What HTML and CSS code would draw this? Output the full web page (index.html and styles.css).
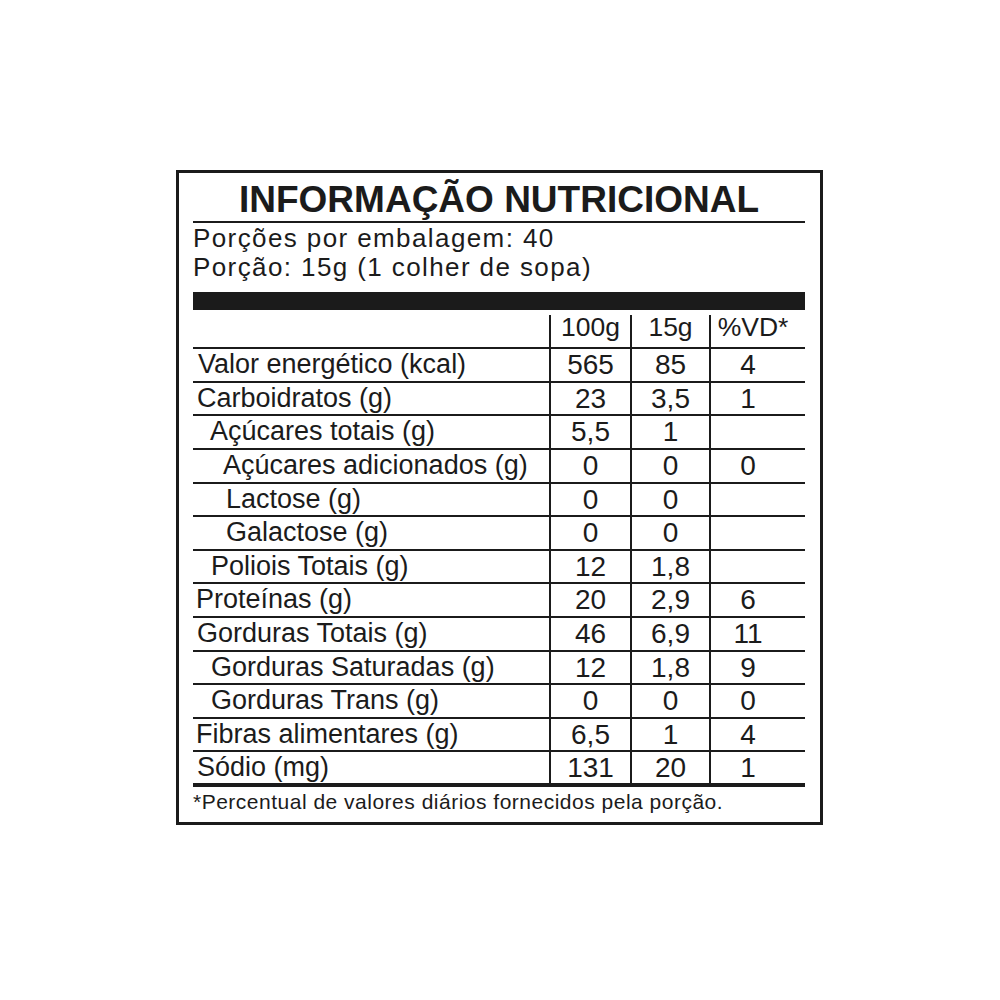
FILE: index.html
```html
<!DOCTYPE html>
<html lang="pt-BR">
<head>
<meta charset="utf-8">
<title>Informação Nutricional</title>
<link rel="stylesheet" href="styles.css">
</head>
<body>
<div class="label">
  <h1 class="title">INFORMAÇÃO NUTRICIONAL</h1>
  <div class="portion">
    <div>Porções por embalagem: 40</div>
    <div>Porção: 15g (1 colher de sopa)</div>
  </div>
  <div class="bar"></div>
  <div class="row head">
    <div class="name"></div>
    <div class="num">100g</div>
    <div class="num">15g</div>
    <div class="num vd">%VD*</div>
  </div>
  <div class="row"><div class="name i0">Valor energético (kcal)</div><div class="num">565</div><div class="num">85</div><div class="num vd">4</div></div>
  <div class="row"><div class="name i0c">Carboidratos (g)</div><div class="num">23</div><div class="num">3,5</div><div class="num vd">1</div></div>
  <div class="row"><div class="name i1">Açúcares totais (g)</div><div class="num">5,5</div><div class="num">1</div><div class="num vd"></div></div>
  <div class="row"><div class="name i2">Açúcares adicionados (g)</div><div class="num">0</div><div class="num">0</div><div class="num vd">0</div></div>
  <div class="row"><div class="name i3">Lactose (g)</div><div class="num">0</div><div class="num">0</div><div class="num vd"></div></div>
  <div class="row"><div class="name i3">Galactose (g)</div><div class="num">0</div><div class="num">0</div><div class="num vd"></div></div>
  <div class="row"><div class="name i4">Poliois Totais (g)</div><div class="num">12</div><div class="num">1,8</div><div class="num vd"></div></div>
  <div class="row"><div class="name i0p">Proteínas (g)</div><div class="num">20</div><div class="num">2,9</div><div class="num vd">6</div></div>
  <div class="row"><div class="name i0c">Gorduras Totais (g)</div><div class="num">46</div><div class="num">6,9</div><div class="num vd">11</div></div>
  <div class="row"><div class="name i4">Gorduras Saturadas (g)</div><div class="num">12</div><div class="num">1,8</div><div class="num vd">9</div></div>
  <div class="row"><div class="name i4">Gorduras Trans (g)</div><div class="num">0</div><div class="num">0</div><div class="num vd">0</div></div>
  <div class="row"><div class="name i0p">Fibras alimentares (g)</div><div class="num">6,5</div><div class="num">1</div><div class="num vd">4</div></div>
  <div class="row last"><div class="name i0c">Sódio (mg)</div><div class="num">131</div><div class="num">20</div><div class="num vd">1</div></div>
  <div class="foot">*Percentual de valores diários fornecidos pela porção.</div>
</div>
</body>
</html>
```
FILE: styles.css
```css
* {
  box-sizing: border-box;
}

html, body {
  margin: 0;
  padding: 0;
  background: #ffffff;
}

body {
  padding: 170px 0 0 176px;
  font-family: "Liberation Sans", Arial, Helvetica, sans-serif;
  color: #1b1b1b;
}

.label {
  width: 647px;
  height: 655px;
  border: 3px solid #1b1b1b;
  padding: 0 15px 0 14px;
}

.title {
  margin: 0;
  padding-top: 6px;
  height: 50px;
  font-size: 37px;
  line-height: 42px;
  font-weight: bold;
  text-align: center;
  border-bottom: 2px solid #1b1b1b;
}

.portion {
  padding: 0.5px 0 10.5px 0;
  font-size: 26px;
  line-height: 29px;
  letter-spacing: 1.4px;
}

.bar {
  height: 18px;
  background: #1b1b1b;
}

.row {
  display: grid;
  grid-template-columns: 356px 81px 79px 96px;
  height: 33.6px;
  border-bottom: 2px solid #1b1b1b;
}

.row .name {
  font-size: 27px;
  line-height: 31px;
  white-space: nowrap;
}

.row .num {
  border-left: 2px solid #1b1b1b;
  text-align: center;
  font-size: 28px;
  line-height: 31px;
}

.row .vd {
  padding-right: 20px;
}

.row.head {
  height: 39.3px;
}

.row.head .num {
  margin-top: 5px;
  font-size: 26.5px;
  line-height: 25px;
}

.row.head .vd {
  padding-right: 10px;
}

.row.last {
  height: 34.5px;
  border-bottom-width: 4px;
}

.i0 { padding-left: 5px; }
.i0c { padding-left: 4px; }
.i0p { padding-left: 3px; }
.i1 { padding-left: 17px; }
.i2 { padding-left: 30px; }
.i3 { padding-left: 33px; }
.i4 { padding-left: 18px; }

.foot {
  padding-top: 3px;
  font-size: 21px;
  line-height: 24px;
  letter-spacing: 0.5px;
}
```
